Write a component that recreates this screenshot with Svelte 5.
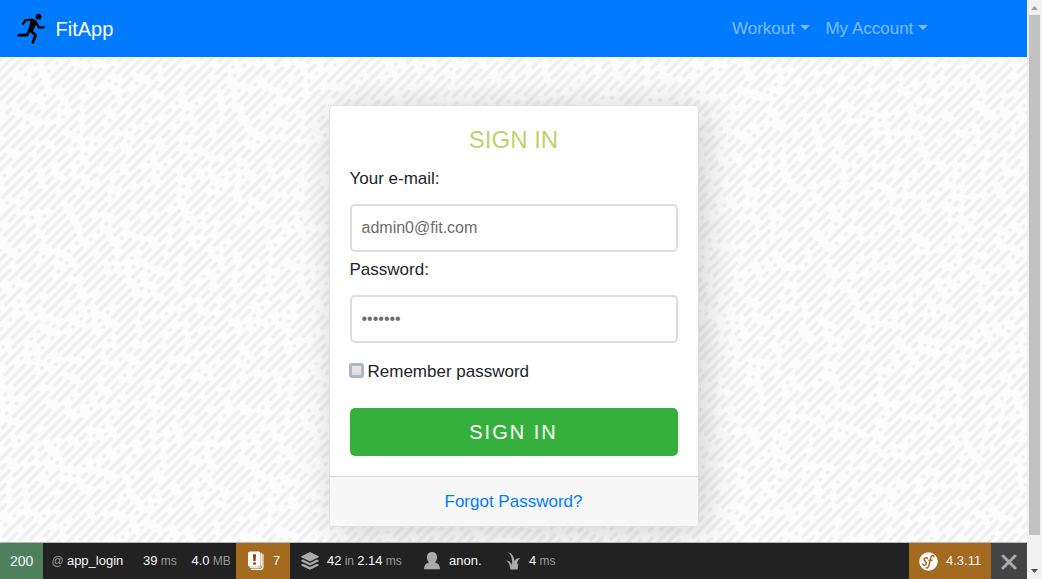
<script>
  // Seeded generator keeps the hatch texture identical on every load.
  let seed = 7;
  function rand() {
    seed = (seed * 1664525 + 1013904223) % 4294967296;
    return seed / 4294967296;
  }
  let d = '';
  for (let s = 60; s < 1600; s += 10) {
    let x = Math.max(0, s - 545) - rand() * 25;
    const end = Math.min(1027, s - 55);
    while (x < end) {
      const r = rand();
      const len = r < 0.28 ? 0.6 : r < 0.52 ? 3 + rand() * 6 : 13 + rand() * 16;
      d += `M${x.toFixed(1)} ${(s - x).toFixed(1)}l${len.toFixed(1)} ${(-len).toFixed(1)}`;
      x += len + 6.5 + rand() * 3;
    }
  }
</script>

<div class="window">
  <div class="page">
    <svg class="texture" width="1027" height="543" aria-hidden="true">
      <path {d} fill="none" stroke="#f0f0f0" stroke-width="3.5" stroke-linecap="round" />
    </svg>
    <nav>
      <a class="brand" href="#home">
        <svg width="30" height="33" viewBox="0 0 30 33" aria-hidden="true">
          <circle cx="21.500" cy="4.700" r="2.900" fill="#000" />
          <g fill="none" stroke="#000" stroke-linecap="round" stroke-linejoin="round">
            <path d="M6 11.700 8.700 8.200 15 7.800" stroke-width="2.300" />
            <path d="m18.700 10 3.300 5.600 4.700-.3" stroke-width="2.300" />
            <path d="m12.400 18.500-2.500 4.500-8.200.2" stroke-width="2.800" />
            <path d="m13.700 18.800 4.900 4.400-2.700 7.100" stroke-width="2.800" />
          </g>
          <path d="M10.700 6.700h4.500c2.500.3 4.300 1.600 5.100 3.500l-4.600 9.300c-1 1.200-4.300.2-4.600-1.600L13.700 9Z" fill="#000" />
        </svg>
        <span>FitApp</span>
      </a>
      <div class="links">
        <a href="#workout">Workout<i></i></a>
        <a href="#account">My Account<i></i></a>
      </div>
    </nav>

    <main>
      <form class="card">
        <div class="body">
          <h1>SIGN IN</h1>
          <label for="email">Your e-mail:</label>
          <input id="email" class="field" type="text" placeholder="admin0@fit.com" />
          <label for="password">Password:</label>
          <input id="password" class="field" type="text" placeholder="•••••••" />
          <label class="remember"><input type="checkbox" /><span>Remember password</span></label>
          <button type="button">SIGN IN</button>
        </div>
        <footer><a href="#forgot">Forgot Password?</a></footer>
      </form>
    </main>

    <div class="toolbar">
      <div class="status">200</div>
      <div class="route"><span><em>@</em> app_login</span></div>
      <div class="time"><span>39 <em>ms</em></span></div>
      <div class="memory"><span>4.0 <em>MB</em></span></div>
      <div class="log">
        <svg width="16" height="20" viewBox="0 0 16 20" aria-hidden="true">
          <path d="M14.900 3.500V16q0 2.300-2.200 2.300H3.500" fill="none" stroke="#fff" stroke-width="1.200" stroke-linecap="round" />
          <path d="M13.300 1.800v13q0 1.900-1.800 1.900H1.800" fill="none" stroke="#fff" stroke-width="1" />
          <rect x="0" y="0.500" width="12.500" height="15.200" rx="2" fill="#fff" />
          <path d="M4.900 3.300h3.200l-.5 6.600H5.400Z" fill="#7a4a10" />
          <rect x="5.100" y="11.300" width="2.800" height="2.500" rx=".7" fill="#7a4a10" />
        </svg>
        <span>7</span>
      </div>
      <div class="db">
        <svg width="18" height="19" viewBox="0 0 18 19" fill="#aaa" aria-hidden="true">
          <path d="M9 0 17.500 4.200q.7.500 0 1L9 9.400.5 5.200q-.7-.5 0-1Z" />
          <path d="m.3 8.200 1.800-.7L9 10.900l6.900-3.400 1.800.7v1.100L9 13.600.3 9.300Z" />
          <path d="m.3 12.400 1.800-.7L9 15.100l6.900-3.400 1.800.7v1.100L9 17.800.3 13.500Z" />
        </svg>
        <span>42 <em>in</em> 2.14 <em>ms</em></span>
      </div>
      <div class="user">
        <svg width="16" height="18" viewBox="0 0 16 18" fill="#aaa" aria-hidden="true">
          <path d="M8 0c3.400 0 5.100 2 5.100 5 0 2.200-.7 4.100-2 5.400 2.700.8 4.500 2.300 4.800 5.600v1.300H.1V16c.3-3.300 2.100-4.800 4.800-5.600-1.300-1.300-2-3.200-2-5.400 0-3 1.700-5 5.100-5Z" />
        </svg>
        <span>anon.</span>
      </div>
      <div class="twig">
        <svg width="15" height="18" viewBox="0 0 15 18" fill="#aaa" aria-hidden="true">
          <path d="M1.500.2C5.500.8 8 4 8.500 9.200q.6-2.700 5.800-3.400c-2.500 1.700-2.700 4-3.300 6.700l1.300-1.200-.6 6.200H4.300c-.2-4-1.300-7-4.300-8.900 3.400.2 5 1.500 6 4.500C6.400 8 6 2.700 1.500.2Z" />
        </svg>
        <span>4 <em>ms</em></span>
      </div>
      <div class="symfony">
        <svg width="19" height="19" viewBox="0 0 19 19" aria-hidden="true">
          <circle cx="9.500" cy="9.500" r="9.300" fill="#fff" />
          <g fill="none" stroke="#a46a1f" stroke-width="1.500" stroke-linecap="round">
            <path d="M8.300 6.600C8.300 5 5 5.500 5.100 7.500c.1 1.800 2.700 2.100 2.300 4.200-.3 1.900-3.500 2.100-3.600.3" />
            <path d="M14.900 4.600c-.1-1.600-2.500-1.600-3.100 1.100L9.900 13.400c-.5 2-1.700 3-2.800 2.400M10 8.200h3.200" />
          </g>
        </svg>
        <span>4.3.11</span>
      </div>
      <div class="close">
        <svg width="16" height="16" viewBox="0 0 16 16" aria-hidden="true">
          <path d="m2 2 12 12M14 2 2 14" stroke="#aaa" stroke-width="3" stroke-linecap="round" />
        </svg>
      </div>
    </div>
  </div>

  <div class="scrollbar">
    <svg width="15" height="15" viewBox="0 0 15 15" aria-hidden="true"><path d="m4 10 3.500-4 3.500 4Z" fill="#a3a3a3" /></svg>
    <div class="thumb"></div>
    <svg width="15" height="15" viewBox="0 0 15 15" aria-hidden="true"><path d="m4 5 3.500 4L11 5Z" fill="#505050" /></svg>
  </div>
</div>

<style>
  :global(body) { margin: 0; overflow: hidden; }
  * { box-sizing: border-box; }
  .window { display: flex; width: 1042px; height: 579px; font: 17px/26px "Liberation Sans", Arial, sans-serif; color: #212529; }
  .page { position: relative; display: flex; flex-direction: column; width: 1027px; height: 579px; background: #fcfcfc; overflow: hidden; }
  .texture { position: absolute; inset: 0 auto auto 0; }
  a { color: #007bff; text-decoration: none; }
  nav { position: relative; display: flex; justify-content: space-between; align-items: center; flex: none; height: 57px; padding: 0 99px 0 17px; background: #007bff; }
  .brand { display: flex; align-items: center; gap: 8.5px; color: #fff; font-size: 20px; }
  .links { display: flex; gap: 15.800px; }
  .links a { color: rgba(255, 255, 255, .5); }
  .links i { display: inline-block; margin-left: 4.700px; vertical-align: 4px; border: 5px solid transparent; border-bottom: 0; border-top-color: currentColor; }
  main { position: relative; flex: 1; min-height: 0; padding-top: 48px; }
  .card { width: 370px; height: 422px; margin: 0 auto; border: 1px solid #dfdfdf; border-radius: 4px; background: #fff; box-shadow: 5px 4px 36px rgba(0, 0, 0, .18); display: flex; flex-direction: column; overflow: hidden; }
  .body { flex: 1; display: flex; flex-direction: column; padding: 19px 20px 0; }
  h1 { margin: 0; font-size: 24px; line-height: 29px; font-weight: 400; text-align: center; color: #bfd16b; }
  label { height: 26px; margin: 12px 0 12px; }
  .field { width: 100%; height: 48px; border: 2px solid #ddd; border-radius: 5px; padding: 0 10px; background: #fff; font: 16px "Liberation Sans", Arial, sans-serif; }
  .field::placeholder { color: #6c6c6c; opacity: 1; }
  .field + label { margin: 5px 0 12px; }
  .field + .remember { display: flex; align-items: center; gap: 4px; margin: 16px 0 23px; }
  .remember input { appearance: none; width: 15px; height: 15px; margin: -3px 0 0 -1px; border: 2px solid #a9b3d8; border-radius: 3px; background: linear-gradient(#ececec, #dcdcdc); box-shadow: inset 0 0 0 1px #b9b6b2; }
  button { height: 48px; border: 0; border-radius: 5px; background: #36b03c; color: #fff; font: 20px "Liberation Sans", Arial, sans-serif; letter-spacing: 2px; }
  footer { height: 50px; border-top: 1px solid #d9d9d9; background: #f7f7f7; text-align: center; line-height: 49px; }
  .toolbar { position: relative; display: flex; flex: none; height: 37px; border-top: 1px solid #b9b9b9; background: #222; color: #f5f5f5; font-size: 13px; line-height: 36px; white-space: nowrap; word-spacing: -.4px; }
  .toolbar div { display: flex; align-items: center; }
  .toolbar em { font-style: normal; font-size: 12px; color: #999; }
  .toolbar .status { width: 43px; padding-left: 10px; background: #4f805d; font-size: 14px; }
  .toolbar .route { width: 100px; padding-left: 8.500px; }
  .toolbar .time { width: 48.500px; }
  .toolbar .memory { width: 44.500px; }
  .toolbar .log { width: 54px; padding-left: 12px; gap: 9px; background: #a46a1f; }
  .toolbar .db { width: 134px; padding-left: 11px; gap: 8px; }
  .toolbar .user { width: 82px; gap: 9px; }
  .toolbar .twig { gap: 8px; }
  .toolbar .symfony { width: 82px; padding-left: 10px; gap: 8px; margin-left: auto; background: #a46a1f; }
  .toolbar .close { width: 36px; justify-content: center; background: #444; padding-top: 2px; }
  .scrollbar { display: flex; flex-direction: column; width: 15px; height: 579px; background: #f1f1f1; }
  .thumb { height: 520px; margin: 0 2px 29px; background: #c1c1c1; }
</style>
